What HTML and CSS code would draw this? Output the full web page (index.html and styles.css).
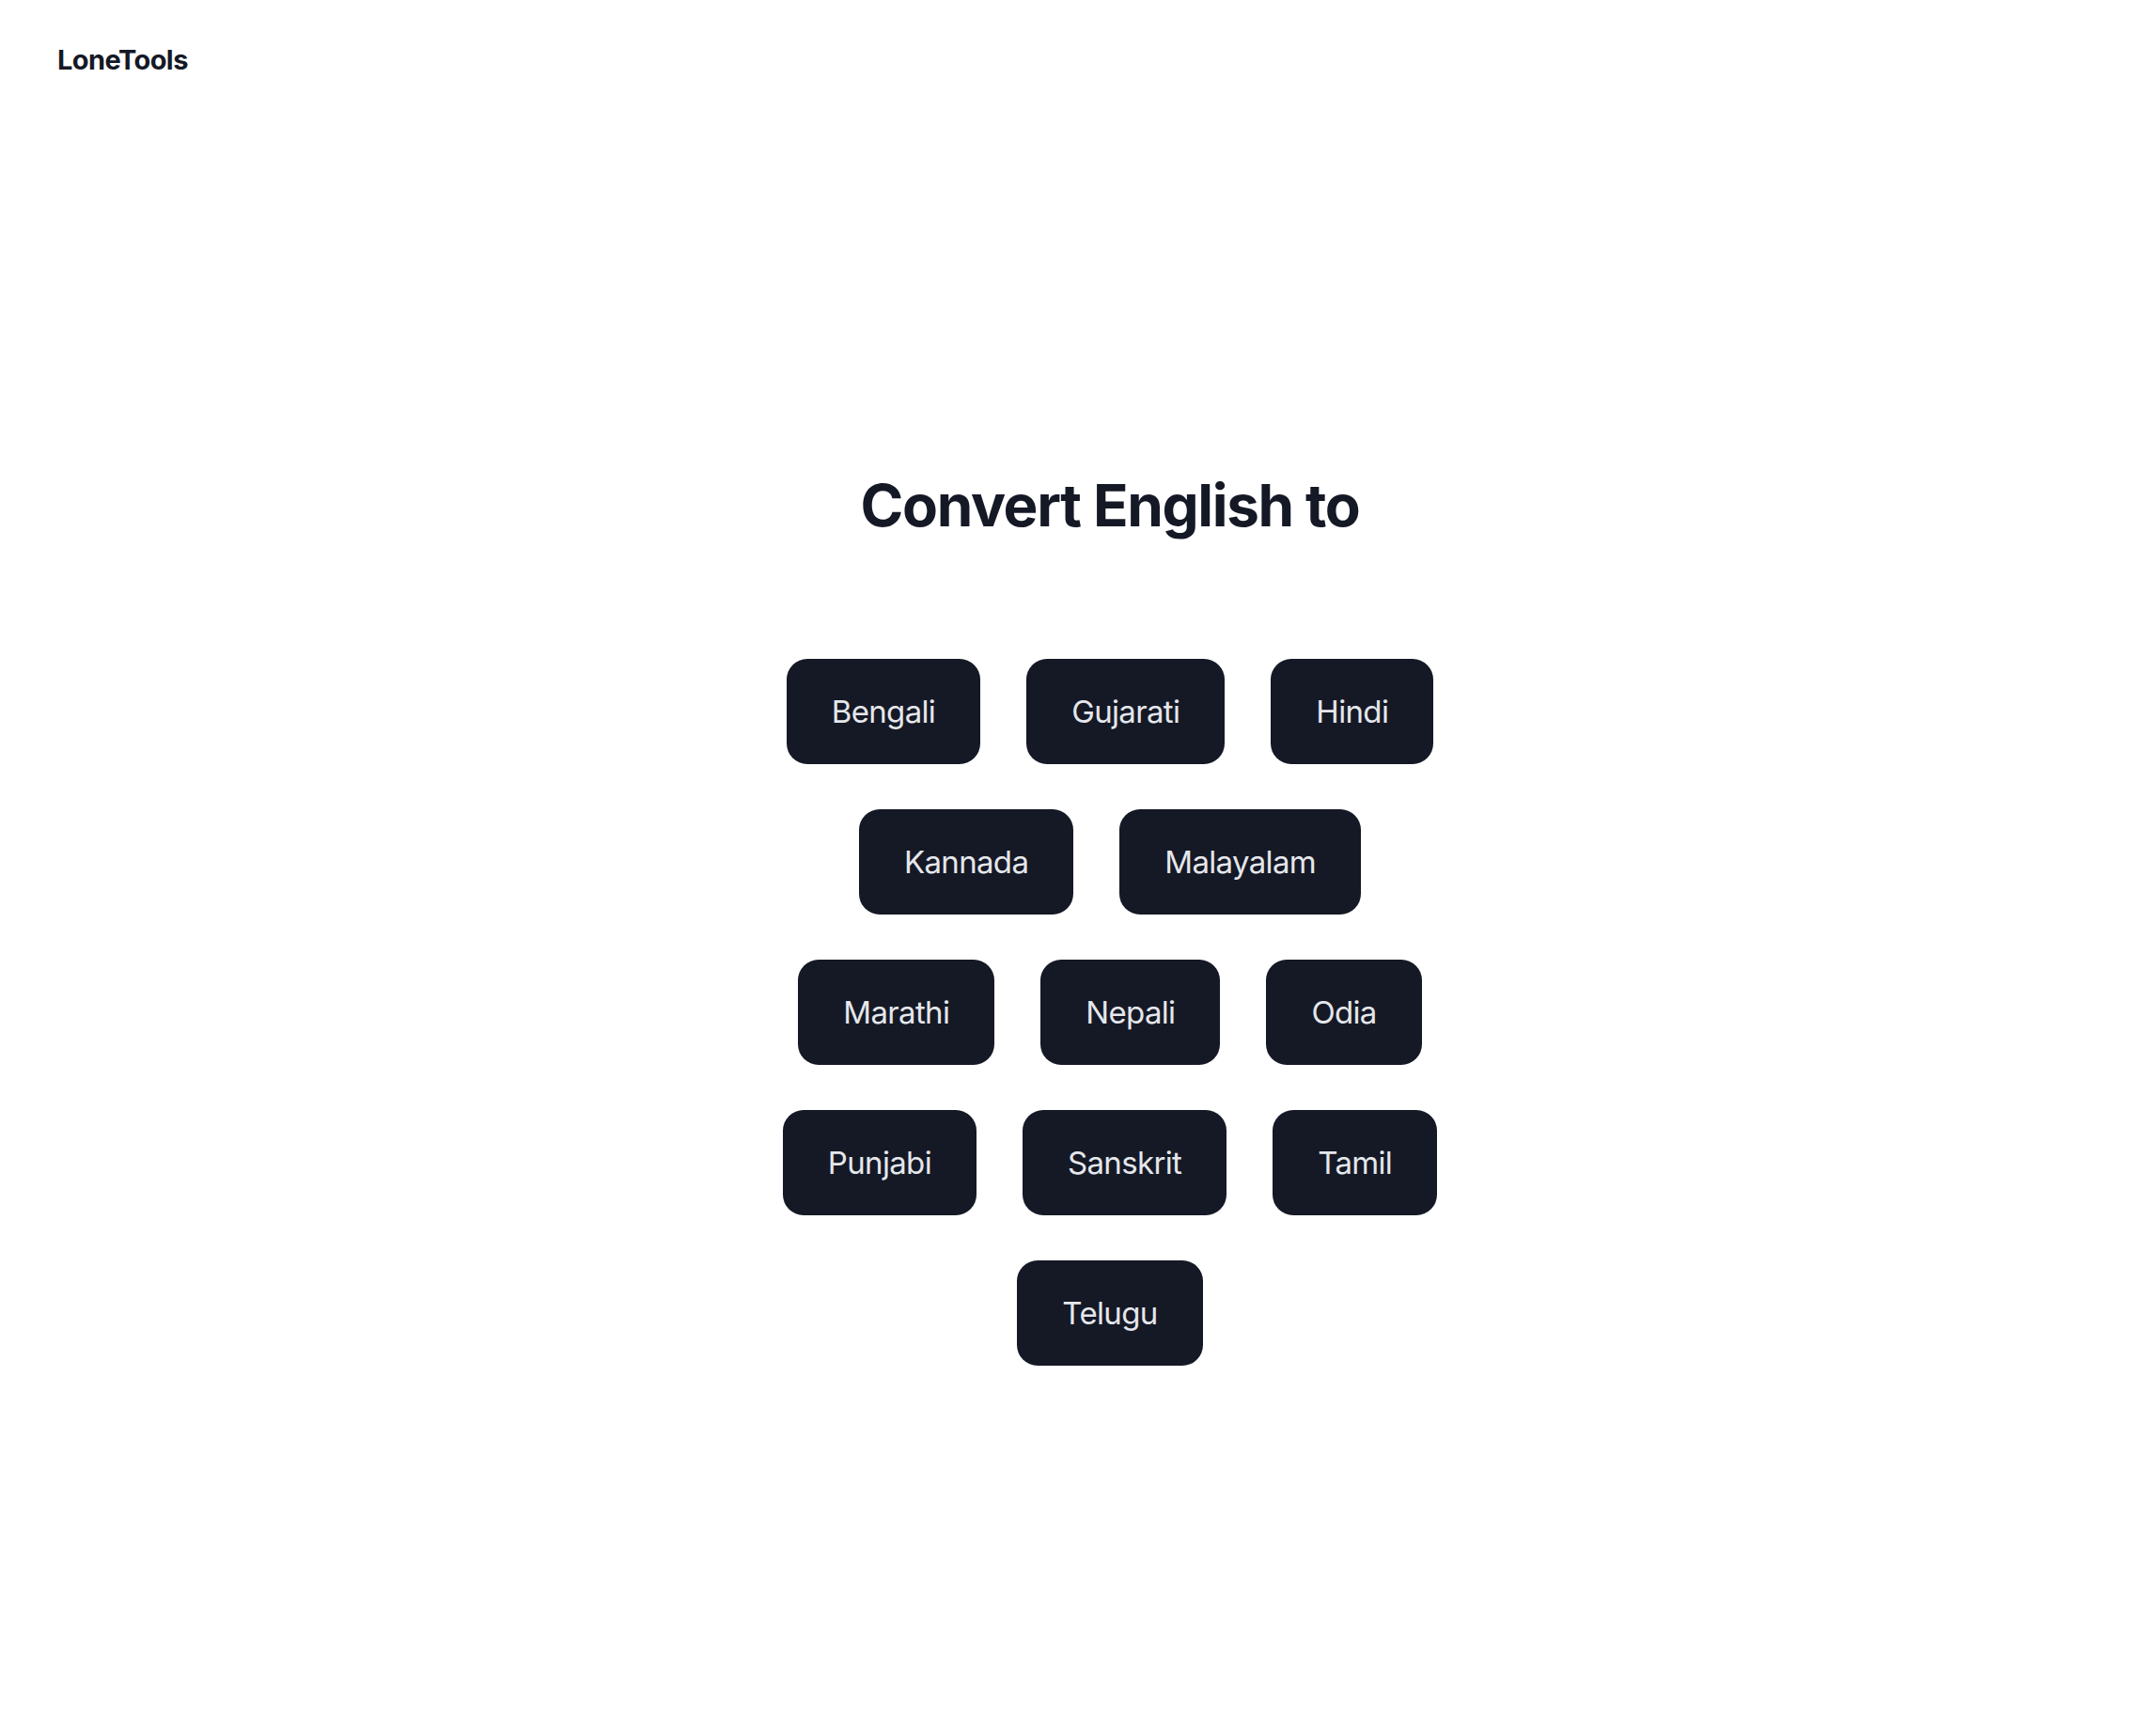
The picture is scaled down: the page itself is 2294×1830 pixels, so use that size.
FILE: index.html
```html
<!DOCTYPE html>
<html lang="en">
<head>
<meta charset="utf-8">
<title>LoneTools</title>
<link rel="stylesheet" href="styles.css">
</head>
<body>
<header class="site-header">
  <a class="brand" href="#">LoneTools</a>
</header>
<main class="main">
  <h1 class="title">Convert English to</h1>
  <div class="lang-list">
    <a class="lang-btn" href="#">Bengali</a>
    <a class="lang-btn" href="#">Gujarati</a>
    <a class="lang-btn" href="#">Hindi</a>
    <a class="lang-btn" href="#">Kannada</a>
    <a class="lang-btn" href="#">Malayalam</a>
    <a class="lang-btn" href="#">Marathi</a>
    <a class="lang-btn" href="#">Nepali</a>
    <a class="lang-btn" href="#">Odia</a>
    <a class="lang-btn" href="#">Punjabi</a>
    <a class="lang-btn" href="#">Sanskrit</a>
    <a class="lang-btn" href="#">Tamil</a>
    <a class="lang-btn" href="#">Telugu</a>
  </div>
</main>
</body>
</html>
```

FILE: styles.css
```css
html, body {
  margin: 0;
  padding: 0;
  background: #ffffff;
}

body {
  font-family: Inter, "Noto Sans", "Liberation Sans", sans-serif;
  color: #151926;
}

.site-header {
  padding: 46px 61px 0;
}

.brand {
  display: inline-block;
  font-size: 29px;
  line-height: 35px;
  font-weight: 700;
  letter-spacing: -0.02em;
  color: #151926;
  text-decoration: none;
}

.main {
  display: flex;
  flex-direction: column;
  align-items: center;
  padding: 419px 0 0 68px;
}

.title {
  margin: 0 0 126px;
  font-size: 62px;
  line-height: 75px;
  font-weight: 700;
  letter-spacing: -0.022em;
  color: #151926;
}

.lang-list {
  display: flex;
  flex-wrap: wrap;
  justify-content: center;
  gap: 48px 49px;
  max-width: 740px;
}

.lang-btn {
  display: block;
  padding: 35px 48px;
  font-size: 33px;
  line-height: 42px;
  font-weight: 400;
  letter-spacing: -0.02em;
  color: #e5e7eb;
  background: #151926;
  border-radius: 22px;
  text-decoration: none;
}
```
